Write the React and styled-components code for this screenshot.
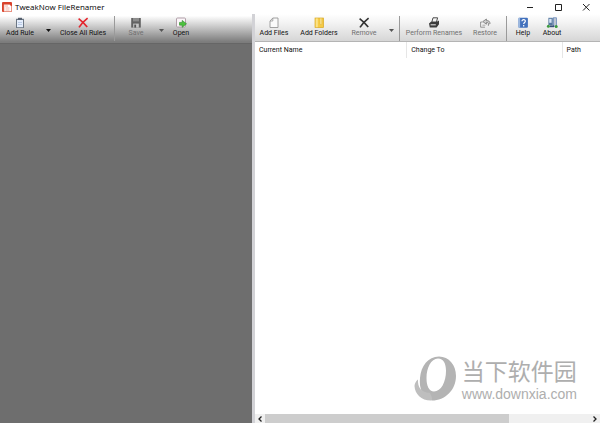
import React from "react";
import styled, { createGlobalStyle } from "styled-components";

const ink = "#222222";

const LogoIcon = () => (
  <svg width="11" height="12" viewBox="0 0 11 12">
    <rect x="0" y="1" width="10" height="10" rx="1" fill="#d9412a" />
    <path d="M2 3.5h5.5l2 1.8v5.2H2z" fill="#fff" stroke="#e88b79" strokeWidth="0.6" />
    <path d="M3 5h3M3.5 7h4M3.5 9h4" stroke="#ee9d8d" strokeWidth="0.8" />
  </svg>
);

const ClipboardIcon = () => (
  <svg width="12" height="12" viewBox="0 0 12 12">
    <rect x="2" y="1.8" width="8" height="9.2" fill="#6b7684" />
    <rect x="3" y="3" width="6" height="7.2" fill="#e4edfb" />
    <rect x="4" y="0.8" width="4" height="2.2" fill="#55606e" />
    <path d="M4 5.5h4M4 7.5h4" stroke="#b5c8e4" strokeWidth="0.9" />
  </svg>
);

const CrossIcon = ({ color }) => (
  <svg width="12" height="12" viewBox="0 0 12 12">
    <path
      d="M1.6 1.6C5 4.2 7.8 7 10.2 10M10.6 1.2C7 4 4.2 7 2 10.4"
      stroke={color}
      strokeWidth="1.7"
      fill="none"
    />
  </svg>
);

const SaveIcon = () => (
  <svg width="12" height="12" viewBox="0 0 12 12">
    <path d="M1.2 1h9.6v9.6H1.2z" fill="#626262" />
    <rect x="3" y="1" width="6" height="3.4" fill="#8c8c8c" />
    <rect x="3.2" y="6.6" width="5.6" height="4" fill="#c6c6c6" />
    <rect x="4.3" y="7.6" width="1.8" height="3" fill="#555" />
  </svg>
);

const OpenIcon = () => (
  <svg width="12" height="12" viewBox="0 0 12 12">
    <rect x="1.5" y="1" width="9" height="9" rx="1" fill="#fbf6f9" stroke="#a8949f" strokeWidth="0.9" />
    <path d="M4.5 5.4h2.7V3.4l4.3 3.4-4.3 3.5V8.2H4.5z" fill="#4cc23e" stroke="#2b8726" strokeWidth="0.6" />
  </svg>
);

const FileIcon = () => (
  <svg width="12" height="12" viewBox="0 0 12 12">
    <path d="M4.8 1H10v9.5H2V4z" fill="#fafafa" stroke="#979797" strokeWidth="0.9" />
    <path d="M4.8 1v3H2" fill="none" stroke="#979797" strokeWidth="0.8" />
  </svg>
);

const FolderIcon = () => (
  <svg width="12" height="12" viewBox="0 0 12 12">
    <rect x="2" y="1" width="8.6" height="9.6" fill="#f6cb45" stroke="#d8a928" strokeWidth="0.7" />
    <path d="M3.8 1.4v8.8" stroke="#fbe288" strokeWidth="2" />
    <path d="M7 1.4v6h1.8v-6" fill="#fdeaa0" stroke="#dcae34" strokeWidth="0.5" />
  </svg>
);

const PrinterIcon = () => (
  <svg width="12" height="12" viewBox="0 0 12 12">
    <path d="M5 0.8h4.6L8.4 5.2H3.8z" fill="#f5f5f5" stroke="#3a3a3a" strokeWidth="0.9" />
    <path d="M1 6.4L3 4.8h5.8L11 3.4v3.8L8.6 10.4H1.8z" fill="#3c3c3c" />
    <path d="M2.6 7.8h5.2" stroke="#dddddd" strokeWidth="1.1" />
  </svg>
);

const RestoreIcon = () => (
  <svg width="12" height="12" viewBox="0 0 12 12">
    <path d="M6 10.2H1.6V5h2" fill="none" stroke="#8b8b8b" strokeWidth="0.9" />
    <path d="M9.4 8.8V7c0-1.2-.6-1.6-2-1.6v1.8L3.8 4.6 7.4 2v1.6C10 3.6 11 4.4 11 7" fill="#cfcfcf" stroke="#777777" strokeWidth="0.8" />
    <path d="M3.4 8.2h3" stroke="#9a9a9a" strokeWidth="0.8" />
  </svg>
);

const HelpIcon = () => (
  <svg width="12" height="12" viewBox="0 0 12 12">
    <rect x="1.5" y="0.8" width="9.4" height="10" rx="1" fill="#4271bd" />
    <rect x="1.5" y="0.8" width="1.6" height="10" fill="#9db9e0" />
    <path d="M5 4.2c0-2.3 3.7-2 3.3.1C8 5.6 6.7 5.4 6.7 7M6.7 8.1v1.3" fill="none" stroke="#fff" strokeWidth="1.2" />
  </svg>
);

const AboutIcon = () => (
  <svg width="12" height="12" viewBox="0 0 12 12">
    <rect x="2.4" y="0.8" width="4.4" height="7.4" fill="#55779f" />
    <rect x="3.2" y="1.8" width="2.4" height="4" fill="#d5e3f3" />
    <rect x="7.4" y="0.8" width="3" height="8.4" fill="#bcc5d2" stroke="#5b7db3" strokeWidth="0.7" />
    <circle cx="2.4" cy="9.2" r="1.5" fill="#3c9a3f" />
    <circle cx="10.2" cy="9.4" r="1.5" fill="#3c9a3f" />
    <path d="M4 8.4h4v1.8H4z" fill="#38507a" />
  </svg>
);

const RingMark = () => (
  <svg width="43" height="46" viewBox="0 0 43 46">
    <path
      fillRule="evenodd"
      d="M25 0.5C35 0.5 42 9 42 20C42 34 31 44.5 18 44.5C14 43 10 40 8 36C6 32 5.5 27 6 22C7 10 14 0.5 25 0.5ZM24 2.5C17 2.5 12.5 12 12.5 22C12.5 30 15 35.5 20 35.5C27 35.5 32 26 32 15C32 7.5 29.5 2.5 24 2.5Z"
      fill="#b4b4b4"
    />
    <path d="M4 23.5C3.5 31 7 36.5 16 37C18 41 19 44 17 44.6C7 44.5 1 38 0.5 30C0.5 27.5 2 25 4 23.5Z" fill="#bebebe" />
  </svg>
);

const ruleTools = [
  { label: "Add Rule", icon: <ClipboardIcon />, width: 40, menu: true },
  { label: "Close All Rules", icon: <CrossIcon color="#e3262e" />, width: 54 },
  { divider: true, gap: 4 },
  { label: "Save", icon: <SaveIcon />, width: 34, menu: true, disabled: true },
  { label: "Open", icon: <OpenIcon />, width: 24 },
];

const fileTools = [
  { label: "Add Files", icon: <FileIcon />, width: 38 },
  { label: "Add Folders", icon: <FolderIcon />, width: 52 },
  { label: "Remove", icon: <CrossIcon color="#333333" />, width: 38, menu: true, disabled: true },
  { divider: true, gap: 0 },
  { label: "Perform Renames", icon: <PrinterIcon />, width: 60, disabled: true },
  { label: "Restore", icon: <RestoreIcon />, width: 42, disabled: true },
  { divider: true, gap: 0 },
  { label: "Help", icon: <HelpIcon />, width: 24 },
  { label: "About", icon: <AboutIcon />, width: 34 },
];

const Tools = ({ items }) =>
  items.map((item, index) => {
    if (item.divider) {
      return <Divider key={index} $gap={item.gap} />;
    }
    return (
      <React.Fragment key={index}>
        <ToolButton type="button" $width={item.width} disabled={item.disabled}>
          {item.icon}
          <span>{item.label}</span>
        </ToolButton>
        {item.menu && (
          <MenuButton type="button" aria-label={`${item.label} options`} disabled={item.disabled}>
            <svg width="5" height="3" viewBox="0 0 5 3">
              <path d="M0 0h5L2.5 3z" fill="currentColor" />
            </svg>
          </MenuButton>
        )}
      </React.Fragment>
    );
  });

const App = () => {
  return (
    <>
      <GlobalStyle />
      <Window>
        <TitleBar>
          <LogoIcon />
          <h1>TweakNow FileRenamer</h1>
          <WindowButton type="button" aria-label="Minimize">
            <svg width="8" height="8" viewBox="0 0 8 8">
              <path d="M1 4.5h6" stroke={ink} />
            </svg>
          </WindowButton>
          <WindowButton type="button" aria-label="Maximize">
            <svg width="8" height="8" viewBox="0 0 8 8">
              <path d="M1.5 1.5h6v6h-6z" stroke={ink} fill="none" />
            </svg>
          </WindowButton>
          <WindowButton type="button" aria-label="Close">
            <svg width="8" height="8" viewBox="0 0 8 8">
              <path d="M1 1l6.5 6.5M7.5 1L1 7.5" stroke={ink} />
            </svg>
          </WindowButton>
        </TitleBar>
        <Panes>
          <RulesPane>
            <Toolbar $dark>
              <Tools items={ruleTools} />
            </Toolbar>
          </RulesPane>
          <FilesPane>
            <Toolbar>
              <Tools items={fileTools} />
            </Toolbar>
            <FileArea>
              <FileTable>
                <thead>
                  <tr>
                    <th>Current Name</th>
                    <th>Change To</th>
                    <th>Path</th>
                  </tr>
                </thead>
              </FileTable>
              <Watermark>
                <RingMark />
                <div>
                  <strong>当下软件园</strong>
                  <span>www.downxia.com</span>
                </div>
              </Watermark>
            </FileArea>
            <ScrollBar>
              <button type="button" aria-label="Scroll left">
                <svg width="6" height="6" viewBox="0 0 6 6">
                  <path d="M4.5 0.5L2 3l2.5 2.5" stroke={ink} strokeWidth="1.3" fill="none" />
                </svg>
              </button>
              <Track>
                <Thumb />
              </Track>
              <button type="button" aria-label="Scroll right">
                <svg width="6" height="6" viewBox="0 0 6 6">
                  <path d="M1.5 0.5L4 3L1.5 5.5" stroke={ink} strokeWidth="1.3" fill="none" />
                </svg>
              </button>
            </ScrollBar>
          </FilesPane>
        </Panes>
      </Window>
    </>
  );
};

const GlobalStyle = createGlobalStyle`
  * {
    box-sizing: border-box;
  }
  body {
    margin: 0;
    background: #ffffff;
    color: #111111;
    font: 7px/9px Roboto, "Liberation Sans", sans-serif;
  }
  button {
    padding: 0;
    border: none;
    background: transparent;
    color: inherit;
    font: inherit;
  }
  svg {
    display: block;
    flex: none;
  }
`;

const Window = styled.div`
  display: flex;
  flex-direction: column;
  height: 100vh;
`;

const TitleBar = styled.header`
  display: flex;
  align-items: center;
  height: 14px;
  padding-left: 2px;
  h1 {
    flex: 1;
    margin: 0 0 0 2px;
    font: 8px/12px "Open Sans", sans-serif;
    color: #000000;
  }
`;

const WindowButton = styled.button`
  display: flex;
  align-items: center;
  justify-content: center;
  width: 28px;
  height: 12px;
`;

const Panes = styled.main`
  display: flex;
  flex: 1;
  min-height: 0;
`;

const RulesPane = styled.section`
  flex: 0 0 42%;
  background: #6e6e6e;
`;

const FilesPane = styled.section`
  display: flex;
  flex: 1;
  flex-direction: column;
  min-width: 0;
  border-left: 3px solid #d2d2d6;
`;

const Toolbar = styled.div`
  display: flex;
  align-items: stretch;
  height: ${(props) => (props.$dark ? "30px" : "28px")};
  padding-bottom: ${(props) => (props.$dark ? "2px" : "0")};
  background: ${(props) =>
    props.$dark
      ? "linear-gradient(#ffffff 6%, #dadada 32%, #7c7c7c 96%)"
      : "linear-gradient(#ffffff, #f4f4f4 30%, #d6d6d6)"};
  border-bottom: 1px solid ${(props) => (props.$dark ? "#666666" : "#b4b4b4")};
`;

const ToolButton = styled.button`
  display: flex;
  flex: none;
  flex-direction: column;
  align-items: center;
  width: ${(props) => props.$width}px;
  padding-top: 3px;
  white-space: nowrap;
  &:disabled {
    color: #707070;
  }
`;

const MenuButton = styled.button`
  display: flex;
  align-items: center;
  justify-content: center;
  width: 16px;
  padding-top: 6px;
  &:disabled {
    color: #555555;
  }
`;

const Divider = styled.span`
  width: 1px;
  margin: 2px 4px 0 ${(props) => props.$gap}px;
  background: #9a9a9a;
`;

const FileArea = styled.div`
  display: flex;
  flex: 1;
  flex-direction: column;
  justify-content: space-between;
  min-height: 0;
`;

const FileTable = styled.table`
  width: 100%;
  table-layout: fixed;
  border-collapse: collapse;
  th {
    height: 16px;
    padding: 0 4px;
    border-right: 1px solid #e6e6e6;
    text-align: left;
    font-weight: normal;
  }
  th:nth-child(1) {
    width: 44%;
  }
  th:nth-child(2) {
    width: 45%;
  }
  th:last-child {
    border-right: none;
  }
`;

const Watermark = styled.div`
  display: flex;
  align-self: flex-end;
  gap: 5px;
  margin: 0 23px 12px 0;
  color: #aeaeae;
  div {
    display: flex;
    flex-direction: column;
    gap: 2px;
  }
  strong {
    font: 23px/28px "Noto Sans CJK SC", sans-serif;
  }
  span {
    font: 14px/16px "Liberation Sans", sans-serif;
  }
`;

const ScrollBar = styled.div`
  display: flex;
  height: 9px;
  background: #f0f0f0;
  button {
    display: flex;
    align-items: center;
    justify-content: center;
    width: 10px;
  }
`;

const Track = styled.div`
  flex: 1;
`;

const Thumb = styled.div`
  width: 75%;
  height: 100%;
  background: #cdcdcd;
`;

export default App;
